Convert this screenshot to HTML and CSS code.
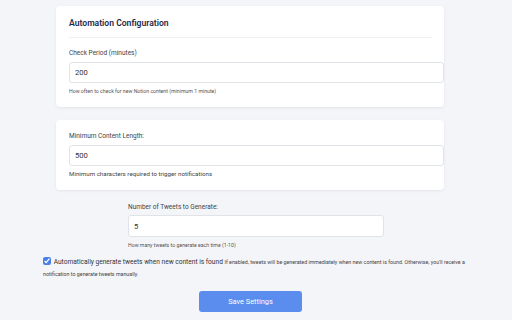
FILE: index.html
```html
<!DOCTYPE html>
<html lang="en">

<head>
    <meta charset="UTF-8">
    <meta name="viewport" content="width=device-width, initial-scale=1.0">
    <title>Settings</title>
    <link rel="stylesheet" href="styles.css">
</head>

<body>
    <main class="settings">
        <section class="card">
            <h2 class="card-title">Automation Configuration</h2>
            <div class="field">
                <label for="checkPeriod">Check Period (minutes)</label>
                <input type="number" id="checkPeriod" value="200">
                <small class="hint">How often to check for new Notion content (minimum 1 minute)</small>
            </div>
        </section>

        <section class="card">
            <div class="field">
                <label for="minLength">Minimum Content Length:</label>
                <input type="number" id="minLength" value="500">
                <p class="hint-lg">Minimum characters required to trigger notifications</p>
            </div>
        </section>

        <div class="field tweets">
            <label for="tweetCount">Number of Tweets to Generate:</label>
            <input type="number" id="tweetCount" value="5">
            <small class="hint">How many tweets to generate each time (1-10)</small>
        </div>

        <div class="auto-row">
            <input type="checkbox" id="autoGenerate" checked>
            <label for="autoGenerate">Automatically generate tweets when new content is found</label>
            <small class="auto-note">If enabled, tweets will be generated immediately when new content is found. Otherwise, you'll receive a notification to generate tweets manually.</small>
        </div>

        <button class="save-btn" id="saveBtn">Save Settings</button>
    </main>
</body>

</html>
```

FILE: styles.css
```css
* {
    box-sizing: border-box;
    margin: 0;
    padding: 0;
}

body {
    font-family: Roboto, 'Liberation Sans', sans-serif;
    background-color: #f4f5f9;
    color: #333;
    padding-top: 6px;
}

.settings {
    width: 388px;
    margin-left: 56px;
    display: flex;
    flex-direction: column;
}

.card {
    background-color: #fff;
    border-radius: 4px;
    box-shadow: 0 1px 3px rgba(0, 0, 0, 0.07);
    padding: 12px 12px 12px 13px;
    margin-bottom: 13px;
}

.card-title {
    font-size: 8.6px;
    font-weight: 600;
    line-height: 10px;
    color: #1b2a48;
    padding-bottom: 9px;
    border-bottom: 1px solid #eef0f3;
    margin-bottom: 11px;
}

.field {
    display: flex;
    flex-direction: column;
}

.field label {
    font-size: 6.5px;
    line-height: 8px;
    color: #444;
    margin-bottom: 5px;
}

.field input {
    box-sizing: content-box;
    width: 100%;
    height: 19px;
    padding: 0 5px;
    border: 1px solid #e0e3e8;
    border-radius: 3px;
    font-family: inherit;
    font-size: 7.6px;
    color: #333;
    background-color: #fff;
    outline: none;
}

.field input::-webkit-inner-spin-button,
.field input::-webkit-outer-spin-button {
    -webkit-appearance: none;
    margin: 0;
}

.hint {
    font-size: 5.2px;
    line-height: 7px;
    color: #555;
    margin-top: 5px;
}

.hint-lg {
    font-size: 6.2px;
    line-height: 8px;
    color: #444;
    margin-top: 4px;
}

.tweets {
    width: 256px;
    margin-left: 72px;
}

.tweets input {
    box-sizing: border-box;
    height: 22px;
}

.tweets label {
    margin-bottom: 4px;
}

.auto-row {
    margin-left: -13px;
    width: 430px;
    margin-top: 7px;
    font-size: 6.6px;
    line-height: 12px;
    color: #333;
}

.auto-row input {
    width: 8px;
    height: 8px;
    vertical-align: -1px;
    accent-color: #4a80e4;
    margin-right: 1px;
}

.auto-note {
    font-size: 5.3px;
    color: #444;
}

.save-btn {
    align-self: flex-start;
    margin-left: 143px;
    margin-top: 11px;
    width: 103px;
    height: 21px;
    background-color: #5b8def;
    color: white;
    border: none;
    border-radius: 3px;
    font-family: inherit;
    font-size: 7.4px;
    cursor: pointer;
}

.save-btn:hover {
    background-color: #4a7ddf;
}
```
